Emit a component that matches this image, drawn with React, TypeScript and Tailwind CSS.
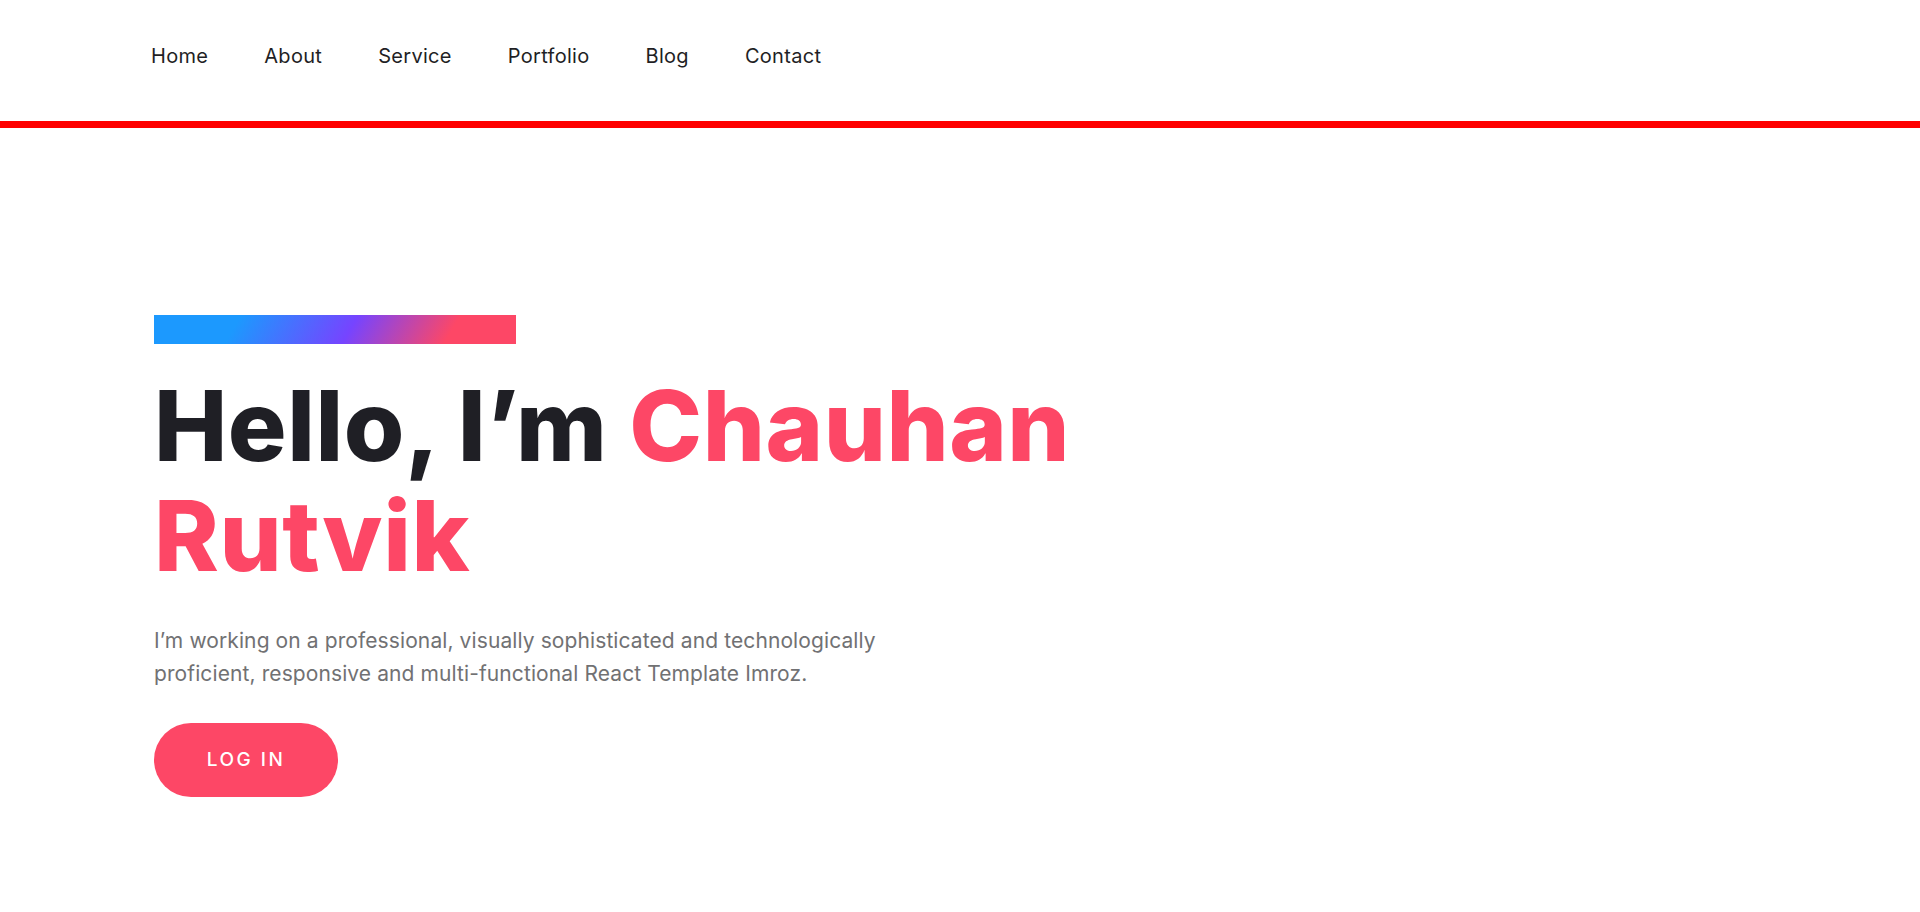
import React from "react";

const links = ["Home", "About", "Service", "Portfolio", "Blog", "Contact"];

const App = () => {
  return (
    <div className="min-h-screen w-full bg-white font-['Inter','Noto_Sans',sans-serif]">
      {/* HEADER */}
      <header className="h-[128px] border-b-[7px] border-[#ff0000] flex items-center pl-[151px] pb-[10px]">
        <nav className="flex items-center gap-[56px]">
          {links.map((link) => (
            <a
              key={link}
              href="#"
              className="text-[20px] text-[#1f1f25] tracking-[0.3px] leading-none"
            >
              {link}
            </a>
          ))}
        </nav>
      </header>

      {/* HERO */}
      <section className="pl-[154px] pt-[187px]">
        <div className="w-[362px] h-[29px] bg-[linear-gradient(120deg,#1c99fe_23%,#7644ff_54%,#fd4766_81%)]" />
        <h1 className="mt-[27px] text-[98px] leading-[110px] font-extrabold text-[#1f1f25] tracking-[0.5px]">
          Hello, I’m <span className="text-[#fd4766]">Chauhan</span>
          <br />
          <span className="text-[#fd4766]">Rutvik</span>
        </h1>
        <p className="mt-[33px] w-[760px] text-[21px] leading-[33px] text-[#717173] tracking-[0.1px]">
          I’m working on a professional, visually sophisticated and technologically proficient, responsive and
          multi-functional React Template Imroz.
        </p>
        <button className="mt-[33px] w-[184px] h-[74px] rounded-full bg-[#fd4766] text-white text-[19px] font-medium tracking-[2.5px] uppercase">
          Log In
        </button>
      </section>
    </div>
  );
};

export default App;
